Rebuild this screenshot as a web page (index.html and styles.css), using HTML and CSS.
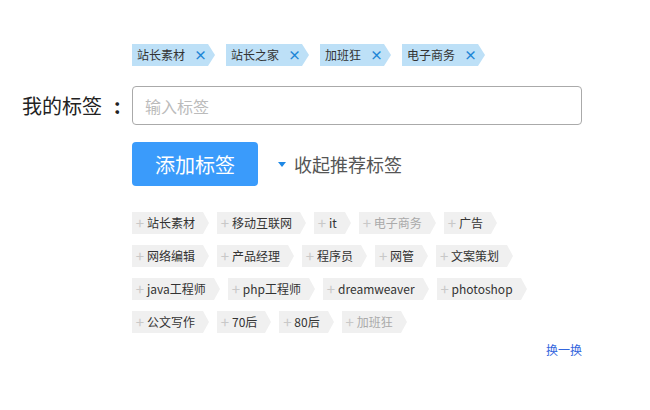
FILE: index.html
```html
<!DOCTYPE html>
<html lang="zh">
<head>
<meta charset="utf-8">
<title>我的标签</title>
<link rel="stylesheet" href="styles.css">
</head>
<body>
<div class="page">
  <div class="row chosen-row">
    <div class="label"></div>
    <div class="chosen">
      <span class="tag tag-on">站长素材<span class="x">×</span></span>
      <span class="tag tag-on">站长之家<span class="x">×</span></span>
      <span class="tag tag-on">加班狂<span class="x">×</span></span>
      <span class="tag tag-on">电子商务<span class="x">×</span></span>
    </div>
  </div>
  <div class="row input-row">
    <div class="label big">我的标签<span class="colon">:</span></div>
    <div class="field"><input class="input" type="text" placeholder="输入标签"></div>
  </div>
  <div class="row action-row">
    <div class="label"></div>
    <div class="actions">
      <button class="btn">添加标签</button>
      <span class="toggle"><span class="caret"></span>收起推荐标签</span>
    </div>
  </div>
  <div class="row rec-row">
    <div class="label"></div>
    <div class="rec">
      <div class="rec-list">
        <span class="tag tag-rec"><span class="plus">+</span>站长素材</span>
        <span class="tag tag-rec"><span class="plus">+</span>移动互联网</span>
        <span class="tag tag-rec"><span class="plus">+</span>it</span>
        <span class="tag tag-rec off"><span class="plus">+</span>电子商务</span>
        <span class="tag tag-rec"><span class="plus">+</span>广告</span>
        <span class="tag tag-rec"><span class="plus">+</span>网络编辑</span>
        <span class="tag tag-rec"><span class="plus">+</span>产品经理</span>
        <span class="tag tag-rec"><span class="plus">+</span>程序员</span>
        <span class="tag tag-rec"><span class="plus">+</span>网管</span>
        <span class="tag tag-rec"><span class="plus">+</span>文案策划</span>
        <span class="tag tag-rec"><span class="plus">+</span>java工程师</span>
        <span class="tag tag-rec"><span class="plus">+</span>php工程师</span>
        <span class="tag tag-rec"><span class="plus">+</span>dreamweaver</span>
        <span class="tag tag-rec"><span class="plus">+</span>photoshop</span>
        <span class="tag tag-rec"><span class="plus">+</span>公文写作</span>
        <span class="tag tag-rec"><span class="plus">+</span>70后</span>
        <span class="tag tag-rec"><span class="plus">+</span>80后</span>
        <span class="tag tag-rec off"><span class="plus">+</span>加班狂</span>
      </div>
      <div class="more"><a class="swap" href="#">换一换</a></div>
    </div>
  </div>
</div>
</body>
</html>
```
FILE: styles.css
```css
* { box-sizing: border-box; }
html, body { margin: 0; padding: 0; background: #fff; }
body {
  font-family: "Noto Sans CJK SC", "Microsoft YaHei", "Noto Sans", sans-serif;
  color: #333;
  width: 650px;
  height: 410px;
  overflow: hidden;
}
.page { padding-top: 44px; }
.row {
  display: grid;
  grid-template-columns: 132px 450px;
  align-items: center;
}
.label { text-align: left; padding-left: 22px; }
.label.big { font-size: 20px; color: #222; }
.colon { margin-left: 12px; font-weight: bold; }

.chosen { display: flex; gap: 11px; height: 22px; }
.tag {
  position: relative;
  display: inline-flex;
  align-items: center;
  height: 22px;
  font-size: 12px;
  line-height: 22px;
  white-space: nowrap;
}
.tag::after {
  content: "";
  position: absolute;
  top: 0;
  right: -7px;
  border-top: 11px solid transparent;
  border-bottom: 11px solid transparent;
  border-left: 7px solid #bde0f7;
}
.tag-on {
  background: #bde0f7;
  color: #333;
  padding: 0 6px 0 5px;
  margin-right: 7px;
}
.tag-on .x {
  color: #1d86d6;
  font-weight: bold;
  font-size: 13px;
  margin-left: 9px;
  width: 8px;
  text-align: center;
}

.input-row { margin-top: 20px; }
.input {
  display: block;
  width: 450px;
  height: 39px;
  border: 1px solid #aaa;
  border-radius: 4px;
  padding: 0 12px;
  font-family: inherit;
  font-size: 16px;
  color: #333;
  outline: none;
}
.input::placeholder { color: #bbb; }

.action-row { margin-top: 17px; }
.actions { display: flex; align-items: center; }
.btn {
  width: 126px;
  height: 44px;
  border: none;
  border-radius: 4px;
  background: #3a9bfb;
  color: #fff;
  font-family: inherit;
  font-size: 20px;
  padding: 0;
}
.toggle {
  display: inline-flex;
  align-items: center;
  margin-left: 20px;
  font-size: 18px;
  color: #555;
}
.caret {
  display: inline-block;
  width: 0;
  height: 0;
  border-left: 4px solid transparent;
  border-right: 4px solid transparent;
  border-top: 5px solid #1e88e5;
  margin-right: 8px;
}

.rec-row { margin-top: 26px; align-items: start; }
.rec-list {
  display: flex;
  flex-wrap: wrap;
  column-gap: 8px;
  row-gap: 11px;
  width: 400px;
}
.tag-rec {
  background: #f0f0f0;
  color: #333;
  padding: 0 8px 0 3px;
  margin-right: 6px;
}
.tag-rec::after {
  right: -6px;
  border-left: 6px solid #f0f0f0;
}
.tag-rec .plus {
  color: #c8c8c8;
  font-size: 15px;
  margin-right: 2px;
  width: 10px;
  text-align: center;
}
.tag-rec.off { color: #aaa; }
.more { text-align: right; margin-top: 6px; line-height: 18px; }
.swap {
  font-size: 12px;
  color: #3366dd;
  text-decoration: none;
}
```
